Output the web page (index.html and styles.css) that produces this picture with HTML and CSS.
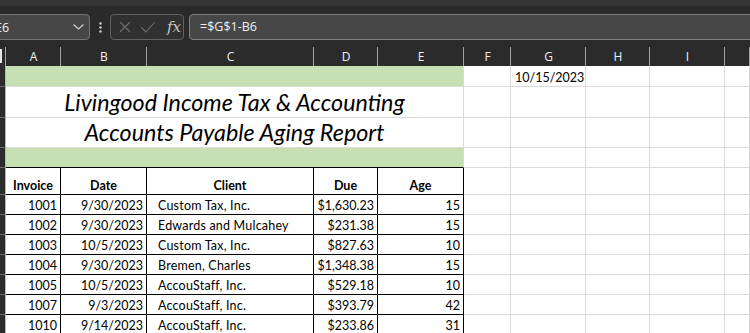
FILE: index.html
```html
<!DOCTYPE html>
<html lang="en">
<head>
    <meta charset="UTF-8">
    <meta name="viewport" content="width=device-width, initial-scale=1.0">
    <title>Accounts Payable Aging Report</title>
    <link rel="stylesheet" href="styles.css">
</head>
<body>

    <div class="ribbon-edge"></div>

    <div class="formula-bar">
        <div class="name-box">
            <span class="name">E6</span>
            <svg class="chevron" width="11" height="6" viewBox="0 0 11 6"><path d="M0.5 0.5 L5.5 5 L10.5 0.5" fill="none" stroke="#d0d0d0" stroke-width="1.2"/></svg>
        </div>
        <div class="grip">
            <svg width="3" height="11" viewBox="0 0 3 11"><circle cx="1.5" cy="1.5" r="1.2" fill="#d0d0d0"/><circle cx="1.5" cy="5.5" r="1.2" fill="#d0d0d0"/><circle cx="1.5" cy="9.5" r="1.2" fill="#d0d0d0"/></svg>
        </div>
        <div class="fx-box">
            <svg width="12" height="12" viewBox="0 0 12 12"><path d="M1 1 L11 11 M11 1 L1 11" stroke="#707070" stroke-width="1.1"/></svg>
            <svg width="14" height="11" viewBox="0 0 14 11"><path d="M0.5 5.5 L5 10 L13.5 0.5" fill="none" stroke="#707070" stroke-width="1.1"/></svg>
            <span class="fx">fx</span>
        </div>
        <div class="formula-input">=$G$1-B6</div>
    </div>

    <div class="col-heads">
        <div class="corner"></div>
        <div class="col-head">A</div>
        <div class="col-head">B</div>
        <div class="col-head">C</div>
        <div class="col-head">D</div>
        <div class="col-head">E</div>
        <div class="col-head">F</div>
        <div class="col-head">G</div>
        <div class="col-head">H</div>
        <div class="col-head">I</div>
        <div class="col-head"></div>
    </div>

    <div class="sheet">
        <!-- row 1 -->
        <div class="rh"></div>
        <div class="cell merged green"></div>
        <div class="cell"></div>
        <div class="cell txt">10/15/2023</div>
        <div class="cell"></div><div class="cell"></div><div class="cell"></div>

        <!-- row 2 -->
        <div class="rh"></div>
        <div class="cell merged title">Livingood Income Tax &amp; Accounting</div>
        <div class="cell"></div><div class="cell"></div><div class="cell"></div><div class="cell"></div><div class="cell"></div>

        <!-- row 3 -->
        <div class="rh"></div>
        <div class="cell merged title">Accounts Payable Aging Report</div>
        <div class="cell"></div><div class="cell"></div><div class="cell"></div><div class="cell"></div><div class="cell"></div>

        <!-- row 4 -->
        <div class="rh"></div>
        <div class="cell merged green boxed-bottom"></div>
        <div class="cell"></div><div class="cell"></div><div class="cell"></div><div class="cell"></div><div class="cell"></div>

        <!-- row 5 headers -->
        <div class="rh"></div>
        <div class="cell th">Invoice</div>
        <div class="cell th">Date</div>
        <div class="cell th">Client</div>
        <div class="cell th">Due</div>
        <div class="cell th">Age</div>
        <div class="cell"></div><div class="cell"></div><div class="cell"></div><div class="cell"></div><div class="cell"></div>

        <!-- data -->
        <div class="rh"></div>
        <div class="cell td num">1001</div><div class="cell td num">9/30/2023</div><div class="cell td client">Custom Tax, Inc.</div><div class="cell td num">$1,630.23</div><div class="cell td num">15</div>
        <div class="cell"></div><div class="cell"></div><div class="cell"></div><div class="cell"></div><div class="cell"></div>

        <div class="rh"></div>
        <div class="cell td num">1002</div><div class="cell td num">9/30/2023</div><div class="cell td client">Edwards and Mulcahey</div><div class="cell td num">$231.38</div><div class="cell td num">15</div>
        <div class="cell"></div><div class="cell"></div><div class="cell"></div><div class="cell"></div><div class="cell"></div>

        <div class="rh"></div>
        <div class="cell td num">1003</div><div class="cell td num">10/5/2023</div><div class="cell td client">Custom Tax, Inc.</div><div class="cell td num">$827.63</div><div class="cell td num">10</div>
        <div class="cell"></div><div class="cell"></div><div class="cell"></div><div class="cell"></div><div class="cell"></div>

        <div class="rh"></div>
        <div class="cell td num">1004</div><div class="cell td num">9/30/2023</div><div class="cell td client">Bremen, Charles</div><div class="cell td num">$1,348.38</div><div class="cell td num">15</div>
        <div class="cell"></div><div class="cell"></div><div class="cell"></div><div class="cell"></div><div class="cell"></div>

        <div class="rh"></div>
        <div class="cell td num">1005</div><div class="cell td num">10/5/2023</div><div class="cell td client">AccouStaff, Inc.</div><div class="cell td num">$529.18</div><div class="cell td num">10</div>
        <div class="cell"></div><div class="cell"></div><div class="cell"></div><div class="cell"></div><div class="cell"></div>

        <div class="rh"></div>
        <div class="cell td num">1007</div><div class="cell td num">9/3/2023</div><div class="cell td client">AccouStaff, Inc.</div><div class="cell td num">$393.79</div><div class="cell td num">42</div>
        <div class="cell"></div><div class="cell"></div><div class="cell"></div><div class="cell"></div><div class="cell"></div>

        <div class="rh"></div>
        <div class="cell td num">1010</div><div class="cell td num">9/14/2023</div><div class="cell td client">AccouStaff, Inc.</div><div class="cell td num">$233.86</div><div class="cell td num">31</div>
        <div class="cell"></div><div class="cell"></div><div class="cell"></div><div class="cell"></div><div class="cell"></div>
    </div>

</body>
</html>
```

FILE: styles.css
```css
body {
    margin: 0;
    padding: 0;
    width: 750px;
    height: 333px;
    overflow: hidden;
    background-color: #ffffff;
    font-family: Lato, "Liberation Sans", sans-serif;
}
.ribbon-edge {
    height: 6px;
    background-color: #363636;
}
.formula-bar {
    height: 34px;
    box-sizing: border-box;
    padding-top: 8px;
    display: flex;
    align-items: flex-start;
    background-color: #2a2a2a;
    font-family: "Open Sans", "Noto Sans", sans-serif;
    font-size: 12.5px;
    color: #f0f0f0;
}
.name-box {
    margin-left: -12px;
    width: 102px;
    height: 26px;
    box-sizing: border-box;
    border: 1px solid #727272;
    border-radius: 4px;
    background-color: #474747;
    display: flex;
    align-items: center;
    padding: 0 5px 0 6px;
}
.name {
    flex: 1;
}
.grip {
    width: 20px;
    height: 26px;
    display: flex;
    align-items: center;
    justify-content: center;
}
.fx-box {
    width: 74px;
    height: 26px;
    box-sizing: border-box;
    border: 1px solid #606060;
    border-radius: 4px;
    background-color: #303030;
    display: flex;
    align-items: center;
    gap: 10px;
    padding-left: 8px;
}
.fx {
    font-family: "DejaVu Serif", "Liberation Serif", serif;
    font-style: italic;
    font-size: 15px;
    color: #c8c8c8;
    margin-left: 2px;
}
.formula-input {
    flex: 1;
    margin-left: 5px;
    margin-right: -10px;
    height: 26px;
    box-sizing: border-box;
    border: 1px solid #808080;
    border-radius: 4px;
    background-color: #474747;
    padding-left: 10px;
    line-height: 23px;
}

.col-heads,
.sheet {
    display: grid;
    grid-template-columns: 6px 55px 86px 167px 64px 86px 47px 75px 64px 75px 1fr;
}
.col-heads {
    height: 26px;
    background-color: #2b2b2b;
    font-family: "Open Sans", "Noto Sans", sans-serif;
    font-size: 12px;
    color: #f2f2f2;
}
.col-head {
    text-align: center;
    line-height: 16px;
    padding-top: 9px;
    background: linear-gradient(#a0a0a0, #a0a0a0) right bottom / 1px 19px no-repeat;
}
.corner {
    background:
        linear-gradient(#e6e6e6, #e6e6e6) left 9px / 2px 14px no-repeat,
        linear-gradient(#a0a0a0, #a0a0a0) right bottom / 1px 19px no-repeat;
}

.sheet {
    grid-template-rows: 21px 31px 30px 20px 27px repeat(7, 20px);
    font-size: 12.5px;
    color: #000000;
}
.rh {
    background-color: #2b2b2b;
    border-right: 1px solid #b8b8b8;
    border-bottom: 1px solid #6c6c6c;
}
.cell {
    box-sizing: border-box;
    border-right: 1px solid #dadada;
    border-bottom: 1px solid #dadada;
    display: flex;
    align-items: flex-end;
    line-height: 15px;
    white-space: nowrap;
    overflow: hidden;
}
.merged {
    grid-column: span 5;
}
.green {
    background-color: #c6e0b4;
}
.boxed-bottom {
    border-bottom-color: #000000;
}
.title {
    justify-content: center;
    font-style: italic;
    font-size: 23.3px;
    line-height: 27px;
    padding-bottom: 1px;
}
.txt {
    padding-left: 4px;
    padding-bottom: 1px;
}
.th,
.td {
    border-right-color: #000000;
    border-bottom-color: #000000;
    padding-bottom: 1px;
}
.th {
    justify-content: center;
    font-weight: bold;
}
.num {
    justify-content: flex-end;
    padding-right: 3px;
}
.client {
    padding-left: 11px;
    letter-spacing: 0.2px;
}
```
